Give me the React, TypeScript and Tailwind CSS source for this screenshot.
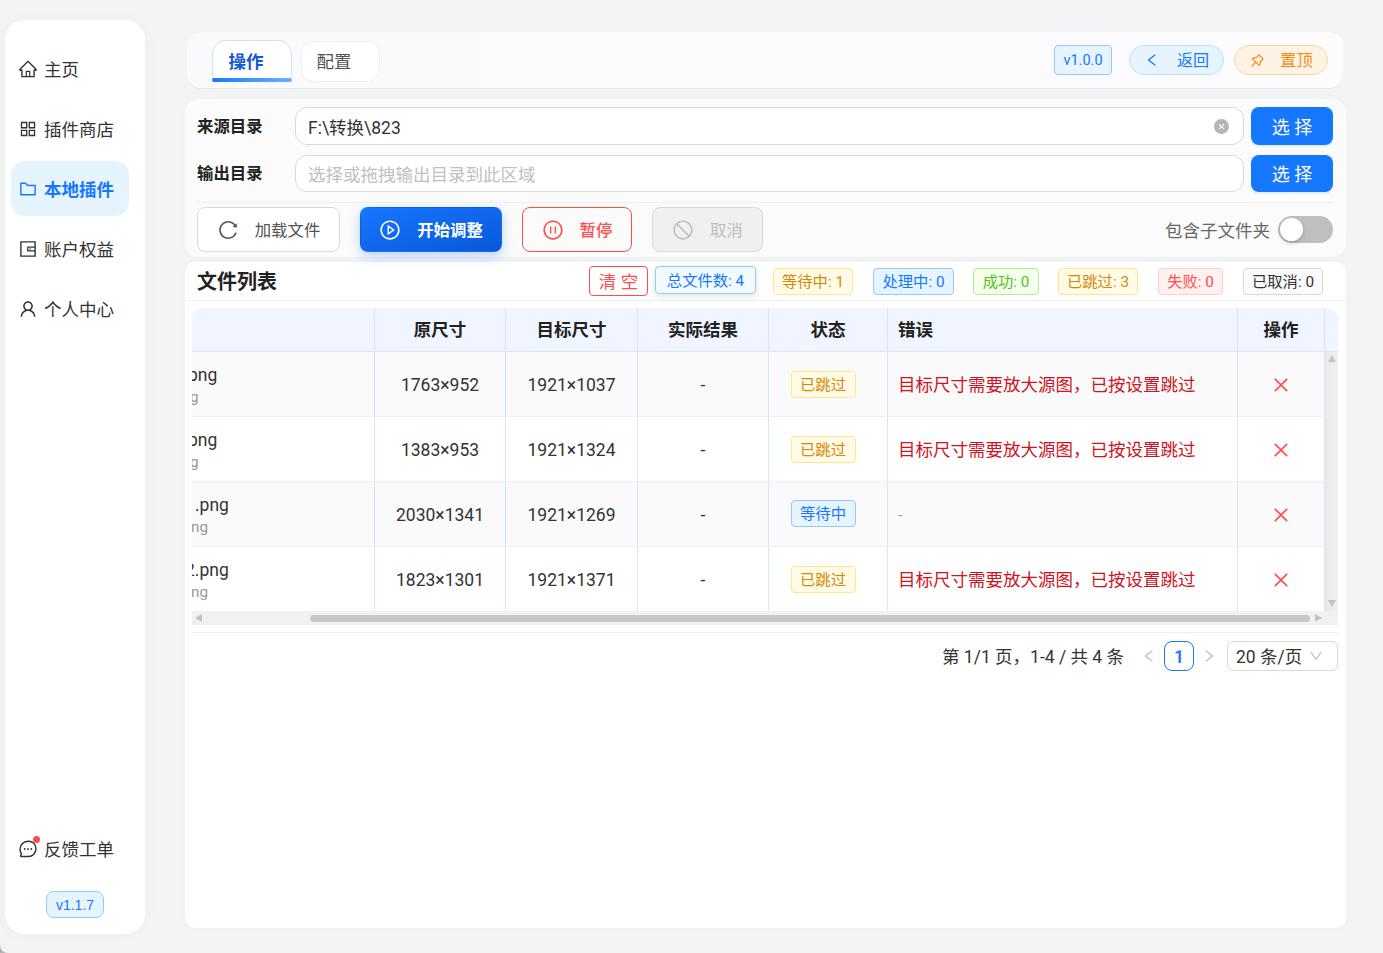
import type { ReactNode } from "react";
import {
  AiFillCloseCircle,
  AiOutlineAppstore,
  AiOutlineClose,
  AiOutlineDown,
  AiOutlineFolder,
  AiOutlineHome,
  AiOutlineLeft,
  AiOutlinePauseCircle,
  AiOutlinePlayCircle,
  AiOutlinePushpin,
  AiOutlineReload,
  AiOutlineRight,
  AiOutlineStop,
  AiOutlineUser,
  AiOutlineWallet,
} from "react-icons/ai";

const font = "font-['Roboto','Noto_Sans_CJK_SC',sans-serif]";
const gridCols = "grid grid-cols-[183px_131px_132px_131px_119px_350px_87px]";

const navItems = [
  { label: "主页", icon: <AiOutlineHome size={20} /> },
  { label: "插件商店", icon: <AiOutlineAppstore size={20} /> },
  { label: "本地插件", icon: <AiOutlineFolder size={20} />, active: true },
  { label: "账户权益", icon: <AiOutlineWallet size={20} /> },
  { label: "个人中心", icon: <AiOutlineUser size={20} /> },
];

const statTags = [
  { text: "等待中: 1", cls: "w-[80px] mr-[20px] text-[#d48806] bg-[#fffbe6] border-[#ffe58f]" },
  { text: "处理中: 0", cls: "w-[81px] mr-[19px] text-[#1677ff] bg-[#e6f4ff] border-[#91caff]" },
  { text: "成功: 0", cls: "w-[66px] mr-[19px] text-[#52c41a] bg-[#f6ffed] border-[#b7eb8f]" },
  { text: "已跳过: 3", cls: "w-[80px] mr-[20px] text-[#d48806] bg-[#fffbe6] border-[#ffe58f]" },
  { text: "失败: 0", cls: "w-[65px] mr-[20px] text-[#ff4d4f] bg-[#fff1f0] border-[#ffccc7]" },
  { text: "已取消: 0", cls: "w-[80px] text-[#333333] bg-[#fafafa] border-[#d9d9d9]" },
];

const skipMsg = "目标尺寸需要放大源图，已按设置跳过";
const rows = [
  { name: "png", sub: "g", nameMl: "-ml-[4px]", subMl: "-ml-[2px]", orig: "1763×952", target: "1921×1037", status: "skip", error: skipMsg },
  { name: "png", sub: "g", nameMl: "-ml-[4px]", subMl: "-ml-[2px]", orig: "1383×953", target: "1921×1324", status: "skip", error: skipMsg },
  { name: ".png", sub: "ng", nameMl: "ml-[3px]", subMl: "-ml-[1px]", orig: "2030×1341", target: "1921×1269", status: "wait", error: "-" },
  { name: "2.png", sub: "ng", nameMl: "-ml-[7px]", subMl: "-ml-[1px]", orig: "1823×1301", target: "1921×1371", status: "skip", error: skipMsg },
];

function Divider() {
  return <div className="h-px bg-[#f0f0f0]" />;
}

function ActionButton({ icon, children, cls }: { icon: ReactNode; children: ReactNode; cls: string }) {
  return (
    <div className={`flex h-[45px] items-center justify-center gap-[16px] rounded-[8px] border text-[16.4px] ${cls}`}>
      {icon}
      <span className="pt-[3px]">{children}</span>
    </div>
  );
}

function PathRow({ label, value, height }: { label: string; value?: string; height: string }) {
  return (
    <div className={`flex items-center ${height}`}>
      <div className="w-[98px] pt-[2px] text-[16.4px] font-semibold text-[#222222]">{label}</div>
      <div className="flex h-full w-[949px] items-center justify-between rounded-[12px] border border-[#d9d9d9] bg-white pl-[12px] pr-[13px] text-[17.5px]">
        {value ? (
          <>
            <span className="pt-[4px] text-[#333333]">{value}</span>
            <AiFillCloseCircle size={17} className="text-[#b5b5b5]" />
          </>
        ) : (
          <span className="pt-[4px] text-[#bfbfbf]">选择或拖拽输出目录到此区域</span>
        )}
      </div>
      <div className="ml-[7px] flex h-full w-[82px] items-center justify-center rounded-[8px] bg-[#1677ff] pt-[2px] text-[18px] text-white shadow-[0_2px_0_rgba(5,145,255,0.1)]">
        选 择
      </div>
    </div>
  );
}

function Triangle({ dir }: { dir: "up" | "down" | "left" | "right" }) {
  const points = {
    up: "4,0 8,7 0,7",
    down: "0,0 8,0 4,7",
    left: "7,0 7,8 0,4",
    right: "0,0 7,4 0,8",
  }[dir];
  return (
    <svg width="8" height="8" viewBox="0 0 8 8" className="shrink-0">
      <polygon points={points} fill="#c4c4c4" />
    </svg>
  );
}

function Sidebar() {
  return (
    <aside className="flex h-[914px] w-[140px] shrink-0 flex-col rounded-[20px] bg-white px-[6px] pt-[21px] pb-[16px] shadow-[0_0_18px_rgba(0,0,0,0.03)]">
      <nav className="flex flex-col gap-[5px]">
        {navItems.map((item) => (
          <div
            key={item.label}
            className={`flex h-[55px] w-[118px] items-center gap-[6px] rounded-[14px] pl-[7px] text-[17.5px] ${
              item.active ? "bg-[#e6f4ff] font-semibold text-[#1677ff]" : "text-[#333333]"
            }`}
          >
            {item.icon}
            <span className="pt-[3px]">{item.label}</span>
          </div>
        ))}
      </nav>
      <div className="relative mt-auto ml-[7px] flex h-[55px] items-center gap-[6px] text-[17.5px] text-[#333333]">
        <svg width="20" height="20" viewBox="0 0 20 20" fill="none" stroke="#333333" strokeWidth="1.4">
          <path d="M10.5 2.2c4.2 0 7.5 3.2 7.5 7.5s-3.3 7.8-7.5 7.8H3.2c-.6 0-.9-.6-.6-1.1l.9-1.6C2.5 13.4 2 11.6 2 9.9c0-4.4 4-7.7 8.5-7.7z" />
          <circle cx="6.7" cy="10" r="0.9" fill="#333333" stroke="none" />
          <circle cx="10" cy="10" r="0.9" fill="#333333" stroke="none" />
          <circle cx="13.3" cy="10" r="0.9" fill="#333333" stroke="none" />
        </svg>
        <span className="pt-[3px]">反馈工单</span>
        <span className="absolute left-[15px] top-[15px] h-[7px] w-[7px] rounded-full bg-[#ff4d4f]" />
      </div>
      <div className="mx-auto mt-[15px] flex h-[27px] w-[58px] items-center justify-center rounded-[8px] border border-[#91caff] bg-[#e6f4ff] pt-[2px] font-['Liberation_Sans',sans-serif] text-[14px] text-[#1677ff]">
        v1.1.7
      </div>
    </aside>
  );
}

function TopBar() {
  return (
    <header className="ml-[2px] mr-[3px] flex h-[56px] items-center rounded-[14px] bg-gradient-to-r from-[#f9fafc] to-[#fcfcfe] pl-[25px] pr-[15px] shadow-[0_1px_0_rgba(0,0,0,0.05)]">
      <div className="relative mt-[2px] flex h-[42px] w-[80px] items-center justify-center rounded-t-[14px] rounded-b-[8px] border border-[#cfe2fd] bg-white pr-[12px] pt-[2px] text-[17.5px] font-bold text-[#1558d6]">
        操作
        <span className="absolute -left-px -right-px bottom-[-1px] h-[4px] rounded-[2px] bg-gradient-to-r from-[#1677ff] to-[#69b1ff]" />
      </div>
      <div className="ml-[9px] mt-[2px] flex h-[41px] w-[79px] items-center justify-center rounded-[12px] border border-[#f0f0f3] bg-white pr-[13px] pt-[2px] text-[17.5px] text-[#555555]">
        配置
      </div>
      <div className="ml-auto flex h-[30px] w-[58px] items-center justify-center rounded-[4px] border border-[#91caff] bg-[#e6f4ff] pt-[2px] text-[14.5px] text-[#1677ff]">
        v1.0.0
      </div>
      <div className="ml-[17px] flex h-[30px] w-[95px] items-center justify-center gap-[17px] rounded-full border border-[#bae0ff] bg-[#e6f4ff] text-[16px] text-[#1677ff]">
        <AiOutlineLeft size={16} />
        <span className="pt-[2px]">返回</span>
      </div>
      <div className="ml-[10px] flex h-[30px] w-[94px] items-center justify-center gap-[14px] rounded-full border border-[#ffd591] bg-[#fff3e6] text-[16.4px] text-[#fa8c16]">
        <AiOutlinePushpin size={17} />
        <span className="pt-[2px]">置顶</span>
      </div>
    </header>
  );
}

function ControlPanel() {
  return (
    <section className="mt-[11px] h-[158px] rounded-[14px] bg-[#fbfbfb] px-[12px] pt-[8px] shadow-[0_0_12px_rgba(0,0,0,0.02)]">
      <PathRow label="来源目录" value="F:\转换\823" height="h-[38px]" />
      <div className="h-[10px]" />
      <PathRow label="输出目录" height="h-[37px]" />
      <div className="mt-[10px]">
        <Divider />
      </div>
      <div className="mt-[4px] flex items-center">
        <ActionButton
          icon={<AiOutlineReload size={22} />}
          cls="w-[143px] border-[#d9d9d9] bg-white text-[#555555]"
        >
          加载文件
        </ActionButton>
        <ActionButton
          icon={<AiOutlinePlayCircle size={22} />}
          cls="ml-[20px] w-[142px] border-transparent bg-gradient-to-br from-[#1677ff] to-[#0958d9] font-semibold text-white shadow-[0_4px_12px_rgba(22,119,255,0.3)]"
        >
          开始调整
        </ActionButton>
        <ActionButton
          icon={<AiOutlinePauseCircle size={22} />}
          cls="ml-[20px] w-[110px] border-[#ff4d4f] bg-[#fbfbfb] font-medium text-[#ff4d4f]"
        >
          暂停
        </ActionButton>
        <ActionButton
          icon={<AiOutlineStop size={22} />}
          cls="ml-[20px] w-[111px] border-[#d9d9d9] bg-[#f0f0f0] text-[#bfbfbf]"
        >
          取消
        </ActionButton>
        <span className="ml-auto pt-[3px] text-[17.5px] text-[#666666]">包含子文件夹</span>
        <div className="ml-[8px] mr-px flex h-[27px] w-[55px] items-center rounded-full bg-[#bfbfbf] pl-[2px]">
          <span className="h-[23px] w-[23px] rounded-full bg-white shadow-[0_2px_4px_rgba(0,35,11,0.2)]" />
        </div>
      </div>
    </section>
  );
}

function FileTable() {
  const headCell = "flex h-full items-center justify-center border-r border-[#d6e4ff] pt-[2px] text-[17.5px] font-semibold text-[#222222]";
  const bodyCell = "flex h-full items-center justify-center border-r border-[#d6e4ff] pt-[2px] text-[17.5px] text-[#333333]";
  return (
    <div className="ml-[7px] w-[1146px]">
      <div className="flex h-[44px] rounded-t-[10px] border-b border-[#d6e4ff] bg-[#f0f5ff]">
        <div className={`${gridCols} h-[43px] w-[1133px]`}>
          <div className={headCell} />
          <div className={headCell}>原尺寸</div>
          <div className={headCell}>目标尺寸</div>
          <div className={headCell}>实际结果</div>
          <div className={headCell}>状态</div>
          <div className={`${headCell} !justify-start pl-[10px]`}>错误</div>
          <div className={headCell}>操作</div>
        </div>
      </div>
      <div className="flex">
        <div className="w-[1133px]">
          {rows.map((row, i) => (
            <div
              key={row.orig}
              className={`${gridCols} h-[65px] border-b border-[#f0f0f0] last:h-[64px] last:border-b-0 ${
                i % 2 === 0 ? "bg-[#fafafa]" : "bg-white"
              }`}
            >
              <div className="h-full overflow-hidden border-r border-[#d6e4ff] pt-[11px]">
                <div className={`text-[17.5px] leading-[24px] text-[#333333] ${row.nameMl}`}>{row.name}</div>
                <div className={`text-[15.3px] leading-[20px] text-[#999999] ${row.subMl}`}>{row.sub}</div>
              </div>
              <div className={bodyCell}>{row.orig}</div>
              <div className={bodyCell}>{row.target}</div>
              <div className={bodyCell}>-</div>
              <div className="flex h-full items-center justify-center border-r border-[#d6e4ff]">
                {row.status === "skip" ? (
                  <span className="-ml-[10px] flex h-[27px] w-[65px] items-center justify-center rounded-[4px] border border-[#ffe58f] bg-[#fffbe6] pt-[2px] text-[15.3px] text-[#d48806]">
                    已跳过
                  </span>
                ) : (
                  <span className="-ml-[10px] -mt-[1px] flex h-[27px] w-[65px] items-center justify-center rounded-[4px] border border-[#91caff] bg-[#e6f4ff] pt-[2px] text-[15.3px] text-[#1677ff]">
                    等待中
                  </span>
                )}
              </div>
              {row.error === "-" ? (
                <div className="flex h-full items-center border-r border-[#d6e4ff] pl-[10px] pt-[2px] text-[15.3px] text-[#999999]">-</div>
              ) : (
                <div className="flex h-full items-center border-r border-[#d6e4ff] pl-[10px] pt-[2px] text-[17.5px] text-[#cf1322]">
                  {row.error}
                </div>
              )}
              <div className={bodyCell}>
                <AiOutlineClose size={20} className="text-[#ff4d4f]" />
              </div>
            </div>
          ))}
        </div>
        <div className="flex w-[13px] flex-col items-center justify-between bg-gradient-to-r from-[#e8e8e8] to-[#f1f1f1] py-[3px]">
          <Triangle dir="up" />
          <Triangle dir="down" />
        </div>
      </div>
      <div className="flex h-[14px] items-center bg-[#f1f1f1] px-[3px]">
        <Triangle dir="left" />
        <div className="ml-[107px] h-[7px] w-[1000px] rounded-full bg-[#c8c8c8]" />
        <div className="ml-[5px]">
          <Triangle dir="right" />
        </div>
      </div>
    </div>
  );
}

function Pagination() {
  return (
    <div className="ml-[7px] mt-[7px] w-[1146px] border-t border-[#f0f0f0] pt-[8px]">
      <div className="flex h-[30px] items-center justify-end text-[17.5px] text-[#333333]">
        <span className="pt-[2px]">第 1/1 页，1-4 / 共 4 条</span>
        <AiOutlineLeft size={16} className="ml-[17px] text-[#bfbfbf]" />
        <span className="ml-[7px] flex h-[30px] w-[30px] items-center justify-center rounded-[8px] border border-[#1677ff] pt-[2px] font-semibold text-[#1677ff]">
          1
        </span>
        <AiOutlineRight size={16} className="ml-[7px] text-[#bfbfbf]" />
        <div className="ml-[10px] flex h-[30px] w-[111px] items-center justify-between rounded-[6px] border border-[#d9d9d9] pl-[8px] pr-[13px]">
          <span className="pt-[2px]">20 条/页</span>
          <AiOutlineDown size={16} className="text-[#bfbfbf]" />
        </div>
      </div>
    </div>
  );
}

function FileList() {
  return (
    <section className="mt-[5px] h-[666px] rounded-[10px] bg-white shadow-[0_0_12px_rgba(0,0,0,0.02)]">
      <div className="flex h-[39px] items-center border-b border-[#f0f0f0] pl-[12px]">
        <h2 className="pt-[2px] text-[20px] font-bold text-[#222222]">文件列表</h2>
        <div className="ml-auto mr-[23px] flex items-center">
          <div className="mr-[7px] flex h-[30px] w-[59px] items-center justify-center rounded-[4px] border border-[#ff4d4f] bg-white pt-[2px] text-[17.5px] text-[#ff4d4f]">
            清 空
          </div>
          <div className="mr-[17px] -mt-[2px] flex h-[28px] w-[101px] items-center justify-center rounded-[4px] border border-[#91caff] bg-[#f0faff] pt-[2px] text-[15.3px] text-[#1677ff] shadow-[0_2px_6px_rgba(0,0,0,0.12)]">
            总文件数: 4
          </div>
          {statTags.map((tag) => (
            <div
              key={tag.text}
              className={`flex h-[27px] items-center justify-center rounded-[4px] border pt-[2px] text-[15.3px] ${tag.cls}`}
            >
              {tag.text}
            </div>
          ))}
        </div>
      </div>
      <div className="mt-[7px]">
        <FileTable />
      </div>
      <Pagination />
    </section>
  );
}

export default function App() {
  return (
    <div className="bg-[#b4b4b4]">
      <div className={`flex h-[953px] w-[1383px] overflow-hidden rounded-bl-[8px] bg-[#f3f4f6] pl-[5px] pt-[20px] ${font}`}>
        <Sidebar />
        <main className="ml-[40px] w-[1161px] pt-[12px]">
          <TopBar />
          <ControlPanel />
          <FileList />
        </main>
      </div>
    </div>
  );
}
